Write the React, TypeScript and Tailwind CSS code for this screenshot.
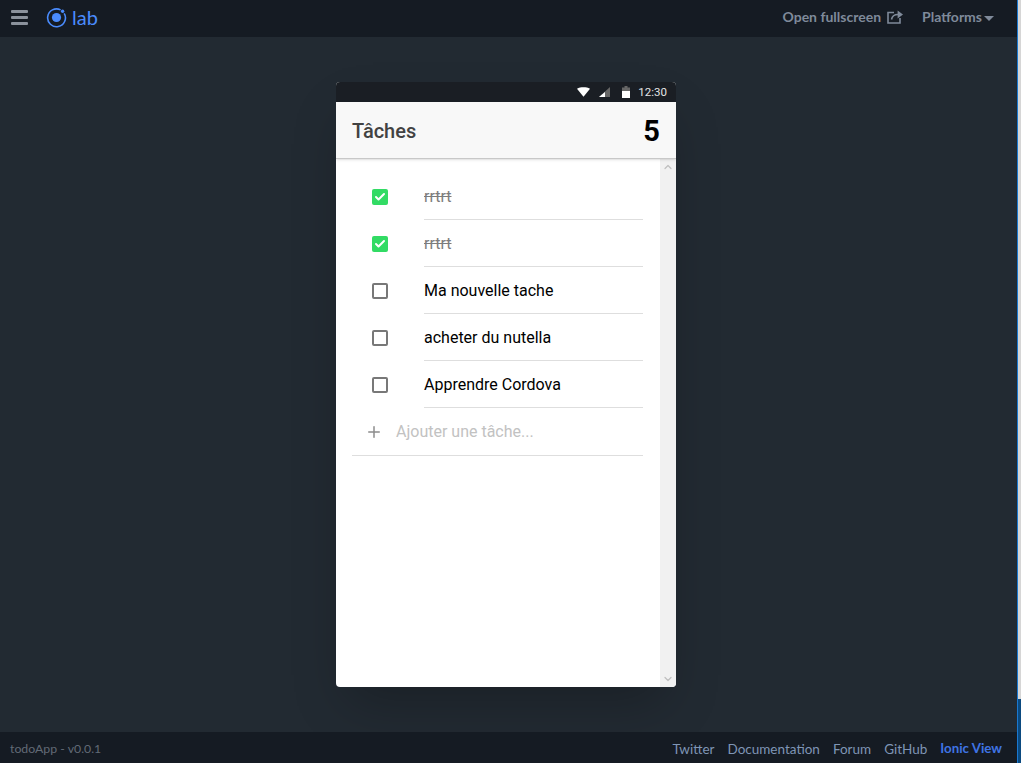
import { Check, ChevronDown, ChevronUp, Plus } from "lucide-react";

const tasks = [
  { label: "rrtrt", done: true },
  { label: "rrtrt", done: true },
  { label: "Ma nouvelle tache", done: false },
  { label: "acheter du nutella", done: false },
  { label: "Apprendre Cordova", done: false },
];

const footerLinks = ["Twitter", "Documentation", "Forum", "GitHub"];

const TaskRow = ({ label, done }: { label: string; done: boolean }) => (
  <div className="flex h-[47px] items-stretch">
    <div className="flex w-[72px] shrink-0 items-center pl-5">
      {done ? (
        <span className="flex size-4 items-center justify-center rounded-[2px] bg-[#32db64]">
          <Check size={12} strokeWidth={4} className="text-white" />
        </span>
      ) : (
        <span className="size-4 rounded-[2px] border-2 border-[#787878]" />
      )}
    </div>
    <div
      className={`flex flex-1 items-center border-b border-[#dedede] pt-[2px] text-base ${
        done ? "text-[#7c7c7c] line-through" : "text-black"
      }`}
    >
      {label}
    </div>
  </div>
);

export default function App() {
  return (
    <div className="flex h-[763px] w-[1021px] overflow-hidden font-['Roboto',sans-serif]">
      <div className="flex w-[1017px] flex-col bg-[#222a32]">
        <header className="flex h-[37px] items-center justify-between bg-[#151b23] pb-[3px] pl-[11px] pr-[23px] font-['Lato',sans-serif] text-sm font-bold text-[#7f8a9a]">
          <div className="flex items-center gap-[18px]">
            <div className="flex w-[17px] flex-col gap-[3px]">
              <span className="h-[3px] rounded-[1px] bg-[#8b929c]" />
              <span className="h-[3px] rounded-[1px] bg-[#8b929c]" />
              <span className="h-[3px] rounded-[1px] bg-[#8b929c]" />
            </div>
            <div className="flex items-center gap-[5px] text-[#4a8bfc]">
              <svg width="21" height="21" viewBox="0 0 21 21">
                <circle cx="10.5" cy="10.5" r="4.6" fill="currentColor" />
                <path
                  d="M14.6 2.9A8.9 8.9 0 1 0 18.2 6.3"
                  fill="none"
                  stroke="currentColor"
                  strokeWidth="1.6"
                />
                <circle cx="16.6" cy="4.3" r="1.7" fill="currentColor" />
              </svg>
              <span className="text-xl font-normal leading-none">lab</span>
            </div>
          </div>
          <div className="flex items-center gap-[19px]">
            <div className="flex items-center gap-[6px]">
              <span>Open fullscreen</span>
              <svg width="16" height="14" viewBox="0 0 16 14" fill="none" stroke="currentColor" strokeWidth="1.6">
                <path d="M7 2.5H1v10.5h12V8" />
                <path d="M4.5 9.5c.5-3 3-5 6.5-5" />
                <path d="M10.6.4 16 4.4 10.6 8.4z" fill="currentColor" stroke="none" />
              </svg>
            </div>
            <div className="flex items-center gap-[2px]">
              <span>Platforms</span>
              <span className="mt-[3px] border-x-[5px] border-t-[5px] border-x-transparent border-t-[#7f8a9a]" />
            </div>
          </div>
        </header>

        <main className="flex flex-1 justify-center pt-[45px] pr-[5px]">
          <div className="flex h-[605px] w-[340px] flex-col overflow-hidden rounded-[4px] bg-white shadow-2xl">
            <div className="flex h-5 shrink-0 items-center justify-end bg-[#1a1e24] pr-[9px] text-[11.5px] text-[#e4e4e4]">
              <svg width="13" height="10" viewBox="0 0 14 10">
                <path d="M0 1.5C4 -.5 10 -.5 14 1.5L7 10z" fill="white" />
              </svg>
              <svg width="11" height="10" viewBox="0 0 11 10" className="ml-[9px]">
                <path d="M11 0V10H0z" fill="#666" />
                <path d="M6 5V10H0z" fill="white" />
              </svg>
              <svg width="8" height="12" viewBox="0 0 8 12" className="ml-3">
                <path d="M2.5 0h3v1.5H8V12H0V1.5h2.5z" fill="#666" />
                <path d="M0 5h8v7H0z" fill="white" />
              </svg>
              <span className="ml-2 pt-[1px]">12:30</span>
            </div>
            <div className="z-10 flex h-[57px] shrink-0 items-center justify-between border-b border-[#c8c8c8] bg-[#f8f8f8] px-4 pt-[2px] shadow-sm">
              <span className="text-xl font-medium text-[#424242]">Tâches</span>
              <span className="text-[29px] font-bold leading-none text-black">5</span>
            </div>
            <div className="flex flex-1">
              <div className="flex-1 pl-4 pr-[17px] pt-[14px]">
                {tasks.map((task, idx) => (
                  <TaskRow key={idx} {...task} />
                ))}
                <div className="flex h-[48px] items-center border-b border-[#dedede] text-base text-[#c2c2c2]">
                  <Plus size={18} strokeWidth={2} className="ml-[13px] text-[#8c8c8c]" />
                  <span className="ml-[13px]">Ajouter une tâche...</span>
                </div>
              </div>
              <div className="flex w-4 flex-col items-center justify-between bg-[#f1f1f1] py-[2px] text-[#c0c0c0]">
                <ChevronUp size={12} strokeWidth={2.5} />
                <ChevronDown size={12} strokeWidth={2.5} />
              </div>
            </div>
          </div>
        </main>

        <footer className="flex h-[31px] items-center justify-between bg-[#151b23] pl-[10px] pr-[15px] pt-[3px] font-['Lato',sans-serif] text-[13.5px]">
          <span className="text-[12.3px] text-[#626a76]">todoApp - v0.0.1</span>
          <div className="flex items-center gap-[13px] text-[#7f95b5]">
            {footerLinks.map((link) => (
              <span key={link}>{link}</span>
            ))}
            <span className="text-[13.3px] font-bold text-[#3f74e4]">Ionic View</span>
          </div>
        </footer>
      </div>
      <div className="flex w-1 flex-col border-l border-[#1a78d0]">
        <div className="h-[699px] bg-[#d6d6d6]" />
        <div className="flex-1 bg-[#0b4a80]" />
      </div>
    </div>
  );
}
